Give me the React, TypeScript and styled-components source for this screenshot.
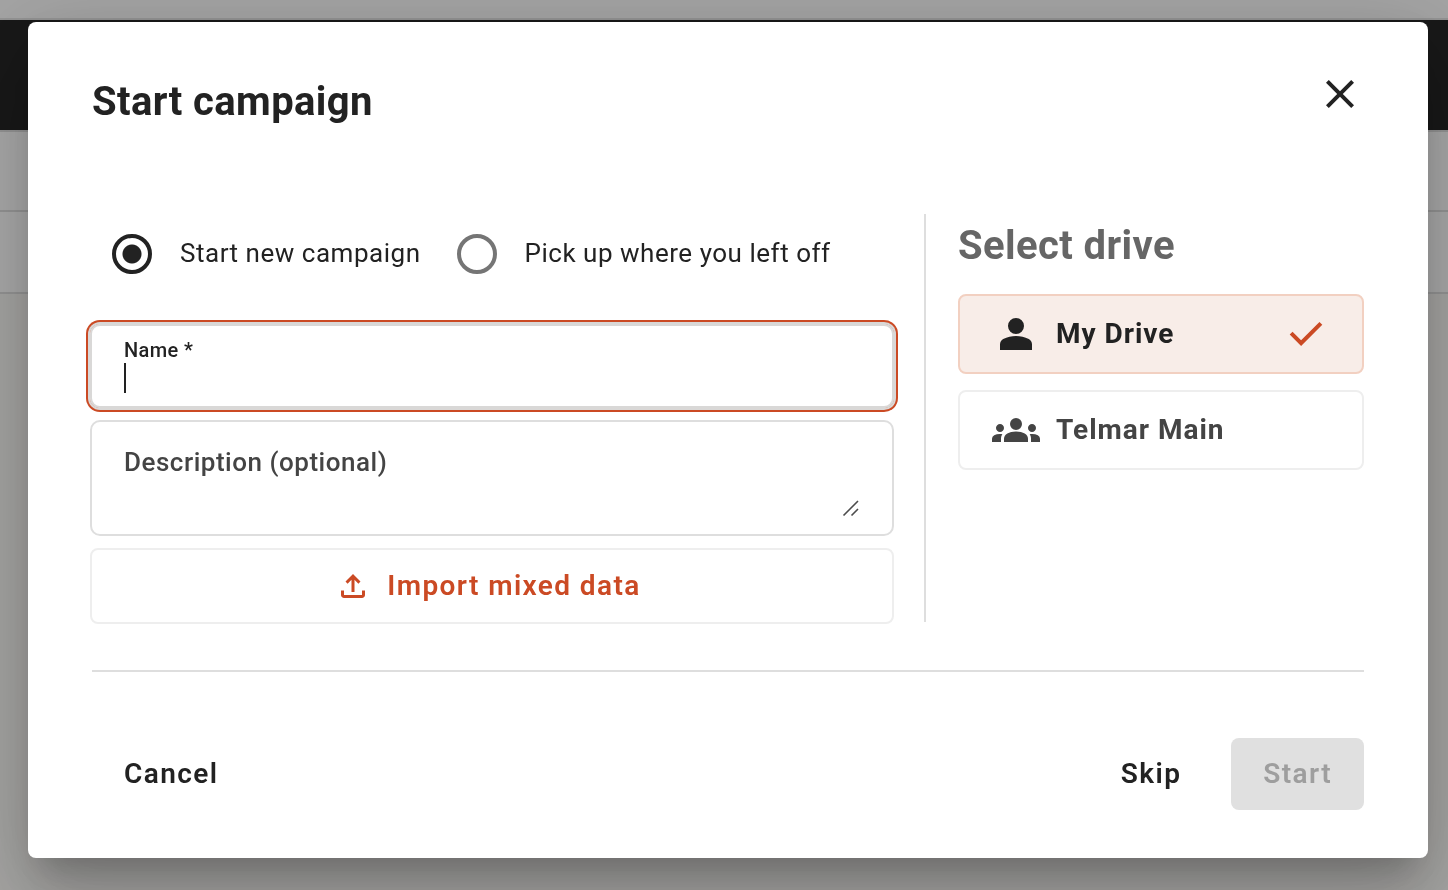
import React, { useState } from "react";
import styled, { createGlobalStyle } from "styled-components";

const color = {
  ink: "#222222",
  inkSoft: "#444444",
  muted: "#666666",
  accent: "#cb4a24",
  accentTint: "#f8ede8",
  accentLine: "#f2d0c1",
  line: "#dedede",
  lineSoft: "#eeeeee",
};

/* letter spacing of each text style */
const tracking = {
  heading: "0.01em",
  label: "0.02em",
  option: "0.035em",
  button: "0.05em",
};

const GlobalStyle = createGlobalStyle`
  *, *::before, *::after { box-sizing: border-box; }
  body {
    margin: 0;
    background: #f6f5f2;
    color: ${color.ink};
    font-family: Roboto, "Liberation Sans", sans-serif;
  }
  button, input, textarea { font-family: inherit; }
`;

/* ---- page behind the dialog ---- */

const Page = styled.div`
  min-height: 100vh;
  overflow: hidden;
`;

const TopStrip = styled.div`
  height: 20px;
  background: #f2f2f2;
  border-bottom: 2px solid #d8d8d8;
`;

const NavBar = styled.header`
  height: 110px;
  background: #242424;
`;

const ToolRow = styled.div<{ $first?: boolean }>`
  height: 82px;
  background: #fcfcfc;
  border-top: ${(p) => (p.$first ? 2 : 0)}px solid #dcdcdc;
  border-bottom: 2px solid #dcdcdc;
`;

/* ---- dialog ---- */

const Scrim = styled.div`
  position: fixed;
  inset: 0;
  padding: 22px 20px 32px 28px;
  background: rgba(0, 0, 0, 0.32);
`;

const Dialog = styled.section`
  padding: 48px 64px;
  border-radius: 8px;
  background: #ffffff;
  box-shadow:
    0 22px 30px -14px rgba(0, 0, 0, 0.2),
    0 48px 76px 6px rgba(0, 0, 0, 0.14),
    0 18px 92px 16px rgba(0, 0, 0, 0.12);
`;

const DialogHeader = styled.div`
  display: flex;
  justify-content: space-between;
  align-items: flex-start;
  padding-bottom: 80px;
`;

const Heading = styled.h2<{ $muted?: boolean }>`
  margin: 0;
  font-size: 40px;
  line-height: 64px;
  font-weight: 700;
  letter-spacing: ${tracking.heading};
  color: ${(p) => (p.$muted ? color.muted : color.ink)};
`;

const IconButton = styled.button`
  display: flex;
  padding: 0;
  border: 0;
  background: none;
  color: ${color.ink};
  cursor: pointer;
`;

const Body = styled.div`
  display: grid;
  grid-template-columns: minmax(0, 1fr) 440px;
  gap: 30px;
  margin-left: -2px;
`;

const FormColumn = styled.form`
  display: flex;
  flex-direction: column;
  gap: 12px;
`;

const RadioRow = styled.div`
  display: flex;
  align-items: center;
  gap: 36px;
  height: 80px;
  margin-bottom: 18px;
  padding-left: 22px;
`;

const RadioLabel = styled.label`
  display: flex;
  align-items: center;
  gap: 28px;
  font-size: 26px;
  line-height: 36px;
  letter-spacing: ${tracking.label};
  cursor: pointer;
`;

const RadioText = styled.span`
  padding-bottom: 2px;
`;

const RadioInput = styled.input`
  appearance: none;
  width: 40px;
  height: 40px;
  margin: 0;
  border: 4px solid #757575;
  border-radius: 50%;

  &:checked {
    border-color: ${color.ink};
    background: radial-gradient(circle, ${color.ink} 9px, transparent 10px);
  }
`;

const Field = styled.div<{ $active?: boolean }>`
  display: flex;
  flex-direction: column;
  padding: ${(p) => (p.$active ? "12px 32px" : "24px 32px 16px")};
  border: 2px solid ${(p) => (p.$active ? "#d9d8d7" : color.line)};
  border-radius: 10px;
  box-shadow: ${(p) =>
    p.$active ? `0 0 0 2px #d9d8d7, 0 0 0 4px ${color.accent}` : "none"};
`;

const FieldLabel = styled.label<{ $floating?: boolean }>`
  font-size: ${(p) => (p.$floating ? 20 : 26)}px;
  line-height: ${(p) => (p.$floating ? 24 : 32)}px;
  font-weight: 500;
  letter-spacing: ${tracking.label};
  color: ${(p) => (p.$floating ? color.ink : color.inkSoft)};
`;

const InputRow = styled.div`
  display: flex;
  align-items: center;
  height: 32px;
`;

const Caret = styled.span`
  width: 2px;
  height: 30px;
  background: ${color.ink};
`;

const TextInput = styled.input`
  flex: 1;
  min-width: 0;
  padding: 0;
  border: 0;
  outline: 0;
  background: none;
  font-size: 26px;
`;

const AreaRow = styled.div`
  display: flex;
  align-items: flex-end;
`;

const TextArea = styled.textarea`
  flex: 1;
  height: 40px;
  padding: 0;
  border: 0;
  outline: 0;
  resize: none;
  background: none;
  font-size: 26px;
`;

const Button = styled.button<{ $outlined?: boolean; $filled?: boolean }>`
  display: flex;
  align-items: center;
  justify-content: center;
  gap: 16px;
  height: ${(p) => (p.$outlined ? 76 : 72)}px;
  padding: ${(p) => (p.$outlined ? "0 40px 0 32px" : "0 32px")};
  border: ${(p) => (p.$outlined ? `2px solid ${color.lineSoft}` : "0")};
  border-radius: 8px;
  background: ${(p) => (p.$filled ? "#e0e0e0" : "transparent")};
  color: ${(p) => (p.$filled ? "#9e9e9e" : p.$outlined ? color.accent : color.ink)};
  font-size: 28px;
  line-height: 36px;
  font-weight: 600;
  letter-spacing: ${tracking.button};
  cursor: pointer;
`;

const DriveColumn = styled.aside`
  height: 408px;
  padding-left: 32px;
  border-left: 2px solid ${color.line};
`;

const DriveList = styled.div`
  display: flex;
  flex-direction: column;
  gap: 16px;
  padding-top: 16px;
`;

const DriveOption = styled.button<{ $selected: boolean }>`
  display: flex;
  align-items: center;
  gap: 16px;
  height: 80px;
  padding: 0 32px;
  border: 2px solid ${(p) => (p.$selected ? color.accentLine : color.lineSoft)};
  border-radius: 8px;
  background: ${(p) => (p.$selected ? color.accentTint : "#ffffff")};
  color: ${(p) => (p.$selected ? color.ink : color.inkSoft)};
  font-size: 28px;
  line-height: 36px;
  font-weight: 700;
  letter-spacing: ${tracking.option};
  text-align: left;
  cursor: pointer;
`;

const DriveName = styled.span`
  flex: 1;
`;

const Check = styled.span`
  display: flex;
  color: ${color.accent};
`;

const Footer = styled.footer`
  display: flex;
  gap: 18px;
  margin-top: 46px;
  padding-top: 66px;
  border-top: 2px solid ${color.line};
`;

const Spacer = styled.div`
  flex: 1;
`;

/* ---- icons ---- */

const paths = {
  close:
    "M6.4 19 5 17.6l5.6-5.6L5 6.4 6.4 5l5.6 5.6L17.6 5 19 6.4 13.4 12l5.6 5.6-1.4 1.4-5.6-5.6z",
  upload:
    "M11 16V7.85l-2.6 2.6L7 9l5-5 5 5-1.4 1.45-2.6-2.6V16zM6 20q-.825 0-1.412-.587T4 18v-3h2v3h12v-3h2v3q0 .825-.587 1.413T18 20z",
  person:
    "M12 12q-1.65 0-2.825-1.175T8 8t1.175-2.825T12 4t2.825 1.175T16 8t-1.175 2.825T12 12m-8 8v-2.8q0-.85.438-1.562T5.6 14.55q1.55-.775 3.15-1.162T12 13t3.25.388 3.15 1.162q.725.375 1.163 1.088T20 17.2V20z",
  groups:
    "M0 18v-1.575q0-1.075 1.1-1.75T4 14q.325 0 .625.013t.575.062q-.35.525-.525 1.1t-.175 1.2V18zm6 0v-1.625q0-.8.438-1.463t1.237-1.162T9.588 13 12 12.75q1.325 0 2.438.25t1.912.75 1.225 1.163.425 1.462V18zm13.5 0v-1.625q0-.65-.162-1.225t-.488-1.075q.275-.05.563-.062T20 14q1.8 0 2.9.663t1.1 1.762V18zM4 13q-.825 0-1.412-.587T2 11q0-.85.588-1.425T4 9q.85 0 1.425.575T6 11q0 .825-.575 1.413T4 13m16 0q-.825 0-1.412-.587T18 11q0-.85.588-1.425T20 9q.85 0 1.425.575T22 11q0 .825-.575 1.413T20 13m-8-1q-1.25 0-2.125-.875T9 9q0-1.275.875-2.137T12 6q1.275 0 2.138.863T15 9q0 1.25-.862 2.125T12 12",
  check: "m9.55 18-5.7-5.7 1.425-1.425L9.55 15.15l9.175-9.175L20.15 7.4z",
};

function Icon({ name, size = 48 }: { name: keyof typeof paths; size?: number }) {
  return (
    <svg width={size} height={size} viewBox="0 0 24 24" fill="currentColor" aria-hidden="true">
      <path d={paths[name]} />
    </svg>
  );
}

function ResizeHandle() {
  return (
    <svg width="18" height="18" viewBox="0 0 18 18" fill="none" stroke="#4c4c4c" strokeWidth="1.6" aria-hidden="true">
      <path d="M1.5 15.5 16 1M9.5 15.5 16 9" />
    </svg>
  );
}

const drives: { id: string; name: string; icon: keyof typeof paths }[] = [
  { id: "mine", name: "My Drive", icon: "person" },
  { id: "telmar", name: "Telmar Main", icon: "groups" },
];

export default function App() {
  const [mode, setMode] = useState("new");
  const [drive, setDrive] = useState("mine");
  const [name, setName] = useState("");

  return (
    <>
      <GlobalStyle />
      <Page>
        <TopStrip />
        <NavBar />
        <ToolRow $first />
        <ToolRow />
      </Page>
      <Scrim>
        <Dialog role="dialog" aria-labelledby="dialog-title">
          <DialogHeader>
            <Heading id="dialog-title">Start campaign</Heading>
            <IconButton type="button" aria-label="Close">
              <Icon name="close" />
            </IconButton>
          </DialogHeader>
          <Body>
            <FormColumn>
              <RadioRow>
                <RadioLabel>
                  <RadioInput type="radio" name="mode" checked={mode === "new"} onChange={() => setMode("new")} />
                  <RadioText>Start new campaign</RadioText>
                </RadioLabel>
                <RadioLabel>
                  <RadioInput type="radio" name="mode" checked={mode === "resume"} onChange={() => setMode("resume")} />
                  <RadioText>Pick up where you left off</RadioText>
                </RadioLabel>
              </RadioRow>
              <Field $active>
                <FieldLabel $floating htmlFor="campaign-name">Name *</FieldLabel>
                <InputRow>
                  {name === "" && <Caret />}
                  <TextInput id="campaign-name" value={name} onChange={(e) => setName(e.target.value)} />
                </InputRow>
              </Field>
              <Field>
                <FieldLabel htmlFor="campaign-description">Description (optional)</FieldLabel>
                <AreaRow>
                  <TextArea id="campaign-description" />
                  <ResizeHandle />
                </AreaRow>
              </Field>
              <Button type="button" $outlined>
                <Icon name="upload" size={36} />
                Import mixed data
              </Button>
            </FormColumn>
            <DriveColumn>
              <Heading $muted>Select drive</Heading>
              <DriveList>
                {drives.map((d) => (
                  <DriveOption
                    key={d.id}
                    type="button"
                    $selected={drive === d.id}
                    aria-pressed={drive === d.id}
                    onClick={() => setDrive(d.id)}
                  >
                    <Icon name={d.icon} />
                    <DriveName>{d.name}</DriveName>
                    {drive === d.id && (
                      <Check>
                        <Icon name="check" />
                      </Check>
                    )}
                  </DriveOption>
                ))}
              </DriveList>
            </DriveColumn>
          </Body>
          <Footer>
            <Button type="button">Cancel</Button>
            <Spacer />
            <Button type="button">Skip</Button>
            <Button type="button" $filled disabled>Start</Button>
          </Footer>
        </Dialog>
      </Scrim>
    </>
  );
}
